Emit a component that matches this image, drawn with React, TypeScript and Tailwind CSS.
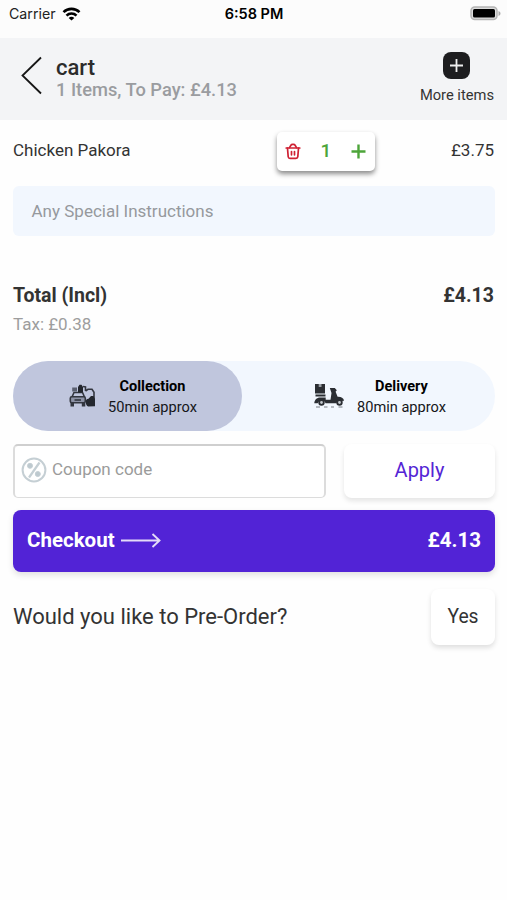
import type { ReactNode } from "react"

function WifiIcon() {
  return (
    <svg width="19" height="14" viewBox="0 0 18 14" fill="none" stroke="#000" strokeWidth="2.600">
      <path d="M1 5.200a11.300 11.300 0 0 1 16 0" />
      <path d="M4 8.600a7.100 7.100 0 0 1 10 0" />
      <path d="M9 13.600 6.200 10.900a3.900 3.900 0 0 1 5.600 0z" fill="#000" stroke="none" />
    </svg>
  )
}

function BatteryIcon() {
  return (
    <svg width="31" height="15" viewBox="0 0 31 15">
      <rect x="1" y="1" width="26" height="12.600" rx="3.800" fill="#ddd" stroke="#b4b4b4" strokeWidth="1.500" />
      <rect x="3" y="3" width="22" height="8.600" rx="1.500" fill="#000" />
      <path d="M28.500 5v5c1.200-.4 2-1.300 2-2.500s-.8-2.100-2-2.500z" fill="#aaa" />
    </svg>
  )
}

function TrashIcon() {
  return (
    <svg width="16" height="17" viewBox="0 0 16 17" fill="none" stroke="#cf2033" strokeWidth="1.700" strokeLinecap="round" strokeLinejoin="round">
      <path d="M1.200 5h13.600" />
      <path d="M4.500 4.600 5.900 2.300C6.300 1.700 6.800 1.400 7.500 1.400h1c.7 0 1.200.3 1.600.9l1.400 2.300" />
      <path d="M2.500 5.200l.7 8.500c.1 1.100.7 1.700 1.800 1.700h6c1.100 0 1.700-.6 1.800-1.700l.7-8.500" />
      <path d="M6.500 8.500v3.300M9.500 8.500v3.300" />
    </svg>
  )
}

function CarPickupIcon() {
  return (
    <svg width="27" height="24" viewBox="0 0 27 24" fill="none" stroke="#33363f" strokeWidth="1.600">
      <path d="M3 13l2-4.500h8.500l2 4.500" />
      <rect x="1.300" y="12.800" width="15" height="6" rx="1.500" fill="#8d92a5" />
      <path d="M5.500 16h6.500" />
      <path d="M1.500 19h3.500v3.500H1.500zM12.800 19h3.500v3.500h-3.500z" fill="#33363f" stroke="none" />
      <path d="M3.200 3.500H8v4H3.200z" fill="#5b6070" stroke="none" />
      <path d="M9 3 10.500 .8h2L14 3v5.500H9z" fill="#23262d" stroke="none" />
      <path d="M14 2.500l2.500.5v4M16.500 7l2.500-1.700h4l2 3V17" />
      <path d="M16.800 18c0-2 1-3.200 2.700-3.200l2.500-2.800h2.500l1.500 3v7.300l-7 .200c-1.500-1-2.200-2.500-2.200-4.500z" fill="#24272e" stroke="none" />
    </svg>
  )
}

function ScooterIcon() {
  return (
    <svg width="30" height="24" viewBox="0 0 30 24" fill="#2b2e33">
      <path d="M1 0h10v9.500H1z" />
      <path d="M4.700 0h2.800v3H4.700z" fill="#9a9fa5" />
      <path d="M1.500 10.500h10v2h-10z" />
      <path d="M15.800 4h5l2 2.200-1.200 1.500 2 5c3.500-.2 5.600 1 6.400 3.600l-1 1c-2-2.100-5.500-1.300-6.500 2H11.500c-.8-3.500-6.200-4-7.800 0H.3c.2-3.500 2.400-5.800 5.900-5.800h5.500v2.200h4.800L17.500 9z" />
      <circle cx="7.500" cy="18.500" r="2.300" fill="#c5cacf" stroke="#2b2e33" strokeWidth="1.800" />
      <circle cx="25.500" cy="18.500" r="2.300" fill="#c5cacf" stroke="#2b2e33" strokeWidth="1.800" />
      <path d="M2 23h4M10 23h3.500M17 23h3M24.500 23h4" stroke="#777c82" strokeWidth="1.200" />
    </svg>
  )
}

function PercentIcon() {
  return (
    <svg width="26" height="26" viewBox="0 0 26 26" fill="#bdc9cf" stroke="#c5cfd4">
      <circle cx="13" cy="13" r="11.400" fill="none" strokeWidth="2" />
      <path d="M18.500 5.500 8 20.500" strokeWidth="2.200" />
      <circle cx="9" cy="8.800" r="2.500" />
      <circle cx="16.800" cy="17" r="2.500" />
    </svg>
  )
}

interface ServiceOptionProps {
  icon: ReactNode
  title: string
  time: string
}

function ServiceOption({ icon, title, time }: ServiceOptionProps) {
  return (
    <>
      {icon}
      <div className="pt-[2px] text-center text-black leading-[21px]">
        <div className="text-[14.500px] font-bold">{title}</div>
        <div className="text-[14.600px] text-[#15161a]">{time}</div>
      </div>
    </>
  )
}

export default function App() {
  return (
    <div className="min-h-[900px] bg-[#fefefe] font-[Roboto,sans-serif] text-[#333]">
      <div className="grid h-[38px] grid-cols-3 items-start bg-[#fcfcfc] pl-[9px] pr-[6px] pt-1 font-[Inter,sans-serif] text-black">
        <div className="flex items-center gap-[6px] text-[14.200px] leading-5 text-[#222]">
          Carrier
          <WifiIcon />
        </div>
        <div className="pr-[2px] text-center text-[14.500px] font-semibold leading-5 whitespace-nowrap">6:58 PM</div>
        <div className="flex justify-end pt-0.5">
          <BatteryIcon />
        </div>
      </div>

      <header className="flex h-[82px] justify-between bg-[#f3f4f6] pl-[21px] pr-[13px]">
        <div className="flex gap-[14px]">
          <svg className="mt-[18px]" width="21" height="39" viewBox="0 0 21 39" fill="none" stroke="#161616" strokeWidth="1.800">
            <path d="M20 1.500 1.500 19.500 20 37.500" />
          </svg>
          <div className="pt-[19px]">
            <h1 className="text-[22px] font-medium leading-[22px] text-[#2b2b2b]">cart</h1>
            <p className="text-[18.300px] font-medium leading-[21px] text-[#9a9ca0]">1 Items, To Pay: £4.13</p>
          </div>
        </div>
        <div className="flex flex-col items-center pt-[14px]">
          <div className="flex size-[27px] items-center justify-center rounded-[8px] bg-[#1d1d1f]">
            <svg width="15" height="15" viewBox="0 0 15 15" stroke="#eee" strokeWidth="1.800">
              <path d="M7.500 1v13M1 7.500h13" />
            </svg>
          </div>
          <span className="mt-[6px] text-[14.700px] leading-5">More items</span>
        </div>
      </header>

      <main className="pl-[13px] pr-3 pt-3">
        <div className="grid grid-cols-[264px_98px_1fr] items-center">
          <span className="pb-[3px] text-[17px] leading-5">Chicken Pakora</span>
          <div className="flex h-[39px] items-center justify-between rounded-[5px] bg-white pl-2 pr-[9px] shadow-[0_3px_5px_rgba(0,0,0,0.45)]">
            <TrashIcon />
            <span className="text-[19px] font-medium text-[#4da53a]">1</span>
            <svg width="15" height="15" viewBox="0 0 15 15" stroke="#4da53a" strokeWidth="2.400">
              <path d="M7.500 .5v14M.5 7.500h14" />
            </svg>
          </div>
          <span className="pb-[3px] pr-px text-right text-[17px] leading-5">£3.75</span>
        </div>

        <div className="mt-[15px] flex h-[50px] items-center rounded-[6px] bg-[#f2f7fe] px-[18.500px] pt-px text-[17px] text-[#96999d]">
          Any Special Instructions
        </div>

        <div className="mt-[48px] flex justify-between pr-px text-[19.500px] font-bold leading-6">
          <span>Total (Incl)</span>
          <span>£4.13</span>
        </div>
        <div className="mt-[6px] text-[17px] leading-5 text-[#9d9d9d]">Tax: £0.38</div>

        <div className="mt-[27px] flex h-[70px] rounded-full bg-[#f2f7fe]">
          <div className="flex w-[229px] items-center gap-3 rounded-full bg-[#c0c6dd] pl-[56px]">
            <ServiceOption icon={<CarPickupIcon />} title="Collection" time="50min approx" />
          </div>
          <div className="flex flex-1 items-center gap-[13px] pl-[72px]">
            <ServiceOption icon={<ScooterIcon />} title="Delivery" time="80min approx" />
          </div>
        </div>

        <div className="mt-[13px] flex gap-[18px]">
          <div className="flex h-[54px] w-[313px] items-center gap-[5px] rounded-[5px] border-2 border-b-[1.500px] border-[#dcdcdc] border-t-[#cfcfcf] bg-white pb-[3px] pl-[6px] text-[17px] text-[#9b9b9b]">
            <PercentIcon />
            Coupon code
          </div>
          <button className="h-[54px] flex-1 rounded-[8px] bg-white pb-[2px] text-[20px] text-[#5425d5] shadow-[0_3px_5px_rgba(0,0,0,0.1)]">
            Apply
          </button>
        </div>

        <button className="mt-3 flex h-[62px] w-full items-center justify-between rounded-[8px] bg-[#5223d6] px-[14px] pb-[2px] text-[20.500px] font-bold text-white shadow-[0_3px_6px_rgba(0,0,0,0.12)]">
          <span className="flex items-center gap-[6px]">
            Checkout
            <svg width="40" height="16" viewBox="0 0 40 16" fill="none" stroke="#e4dcf8" strokeWidth="1.900">
              <path d="M0 8.500h38.500M31.500 2 38.500 8.500l-7 6.500" />
            </svg>
          </span>
          <span>£4.13</span>
        </button>

        <div className="mt-[17px] flex items-center justify-between">
          <span className="pb-[2px] text-[22px]">Would you like to Pre-Order?</span>
          <button className="h-[56px] w-[64px] rounded-[8px] bg-white pt-px text-[19.300px] shadow-[0_3px_5px_rgba(0,0,0,0.12)]">Yes</button>
        </div>
      </main>
    </div>
  )
}
